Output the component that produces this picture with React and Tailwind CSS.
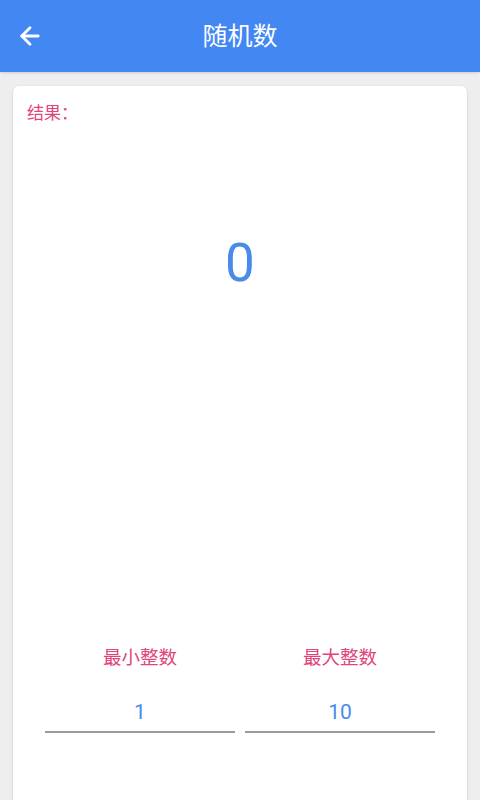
import { ArrowLeft } from "lucide-react";

const font = { fontFamily: '"Noto Sans", "Noto Sans CJK SC", sans-serif' };
const digits = { fontFamily: 'Roboto, "Noto Sans", sans-serif' };

export default function App() {
  return (
    <div className="min-h-[800px] bg-[#eeeeee] overflow-hidden" style={font}>
      <div className="h-[72px] bg-[#4387f3] flex items-center relative shadow-sm">
        <ArrowLeft className="absolute left-[16px] text-white" size={28} strokeWidth={2.4} />
        <div className="w-full text-center text-white text-[25px]">随机数</div>
      </div>
      <div className="mx-[13px] mt-[14px] bg-white rounded-[6px] shadow-[0_1px_3px_rgba(0,0,0,0.15)] pt-[16px] pb-[100px]">
        <div className="px-[14px] text-[17px] leading-[22px] text-[#e0457b]">结果：</div>
        <div className="mt-[113px] text-center text-[53px] leading-[52px] text-[#4a8ae9]" style={digits}>0</div>
        <div className="mt-[354px] px-[32px] grid grid-cols-2 gap-[10px]">
          {[
            ["最小整数", "1"],
            ["最大整数", "10"],
          ].map(([label, val]) => (
            <div key={label} className="flex flex-col items-center">
              <div className="text-[18.5px] leading-[28px] text-[#e0457b]">{label}</div>
              <div className="mt-[24px] w-full h-[38px] flex items-center justify-center text-[21px] text-[#4a8ae9] border-b-2 border-[#9a9a9a]" style={digits}>
                {val}
              </div>
            </div>
          ))}
        </div>
      </div>
    </div>
  );
}
